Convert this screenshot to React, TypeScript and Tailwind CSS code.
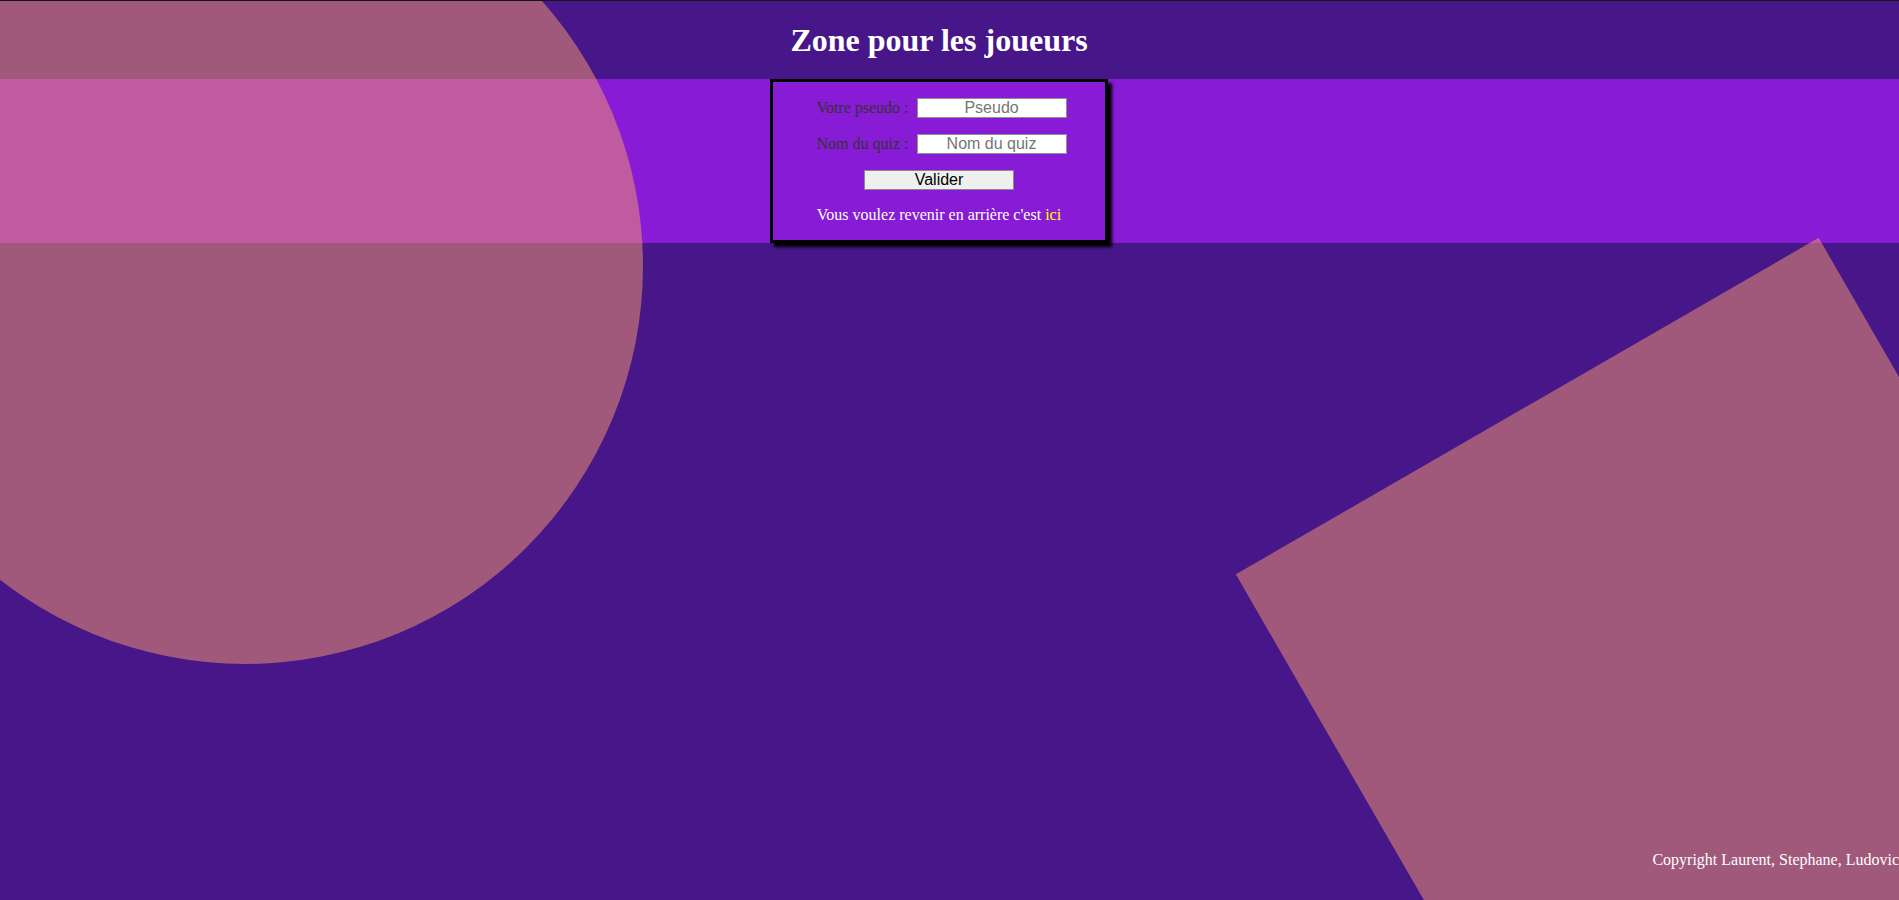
import React from "react";

export default function App() {
  return (
    <div className="relative flex h-[900px] flex-col overflow-hidden border-t border-[#161616] bg-[#47178a] font-['Liberation_Serif',serif]">
      {/* decorative shapes */}
      <div className="pointer-events-none absolute left-[-153px] top-[-133px] h-[796px] w-[796px] rounded-full bg-[rgba(250,155,106,0.5)]" />
      <div className="pointer-events-none absolute left-[1359px] top-[360px] h-[673px] w-[673px] rotate-[-30deg] bg-[rgba(250,155,106,0.5)]" />

      <header className="flex h-[78px] justify-center pr-[21px] pt-[21px]">
        <h1 className="text-[32px] font-bold leading-[normal] text-white">Zone pour les joueurs</h1>
      </header>

      <section className="flex justify-center bg-[#871bd6] pr-[21px]">
        <div className="relative w-[338px] border-[3px] border-black bg-[#871bd6] pb-[16px] pt-[16px] shadow-[4px_4px_3px_#000]">
          <div className="flex h-[20px] items-center justify-center gap-[8px] pl-[5px]">
            <label className="text-[16px] leading-[18px] text-[#333]">Votre pseudo :</label>
            <input
              placeholder="Pseudo"
              className="h-[20px] w-[150px] border border-[#8f8f8f] bg-white text-center font-['Liberation_Sans',sans-serif] text-[16px] leading-[18px] text-black outline-none placeholder:text-[#757575]"
            />
          </div>
          <div className="mt-[16px] flex h-[20px] items-center justify-center gap-[8px] pl-[5px]">
            <label className="text-[16px] leading-[18px] text-[#333]">Nom du quiz :</label>
            <input
              placeholder="Nom du quiz"
              className="h-[20px] w-[150px] border border-[#8f8f8f] bg-white text-center font-['Liberation_Sans',sans-serif] text-[16px] leading-[18px] text-black outline-none placeholder:text-[#757575]"
            />
          </div>
          <div className="mt-[16px] flex justify-center">
            <button className="h-[20px] w-[150px] border border-[#8a8a8a] bg-[#efefef] font-['Liberation_Sans',sans-serif] text-[16px] leading-[18px] text-black">
              Valider
            </button>
          </div>
          <p className="mt-[16px] text-center text-[16px] leading-[18px] text-white">
            Vous voulez revenir en arrière c'est <a className="text-[#ffff00]">ici</a>
          </p>
        </div>
      </section>

      <div className="flex-1" />

      <footer className="relative z-10 pb-[31px] text-right text-[16px] leading-[18px] text-white">
        Copyright Laurent, Stephane, Ludovic
      </footer>
    </div>
  );
}
